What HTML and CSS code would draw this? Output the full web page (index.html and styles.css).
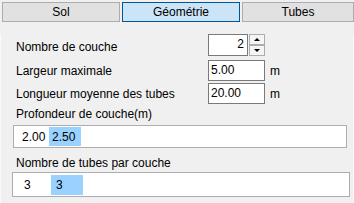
FILE: index.html
```html
<!DOCTYPE html>
<html lang="fr">
<head>
    <meta charset="UTF-8">
    <title>Géométrie</title>
    <link rel="stylesheet" href="styles.css">
</head>
<body>
    <div class="tabs">
        <div class="tab">Sol</div>
        <div class="tab active">Géométrie</div>
        <div class="tab">Tubes</div>
    </div>
    <div class="panel">
        <div class="row first">
            <span class="label">Nombre de couche</span>
            <div class="spin">
                <div class="spin-value">2</div>
                <div class="spin-btns">
                    <div class="spin-btn"><span class="arrow up"></span></div>
                    <div class="spin-btn"><span class="arrow down"></span></div>
                </div>
            </div>
        </div>
        <div class="row">
            <span class="label">Largeur maximale</span>
            <div class="field">5.00</div>
            <span class="unit">m</span>
        </div>
        <div class="row">
            <span class="label">Longueur moyenne des tubes</span>
            <div class="field">20.00</div>
            <span class="unit">m</span>
        </div>
        <div class="section-label">Profondeur de couche(m)</div>
        <div class="list depth">
            <span class="cell">2.00</span>
            <span class="cell selected">2.50</span>
        </div>
        <div class="section-label second">Nombre de tubes par couche</div>
        <div class="list tubes">
            <span class="cell">3</span>
            <span class="cell selected">3</span>
        </div>
    </div>
</body>
</html>
```

FILE: styles.css
```css
body {
    margin: 0;
    background-color: #f0f0f0;
    font-family: "Liberation Sans", Arial, sans-serif;
    font-size: 12px;
    color: #000;
    width: 354px;
    height: 203px;
    overflow: hidden;
}
.tabs {
    display: flex;
    gap: 2px;
    padding: 2px 0 0 2px;
    height: 20px;
}
.tab {
    box-sizing: border-box;
    width: 118px;
    height: 20px;
    border: 1px solid #adadad;
    background-color: #e1e1e1;
    display: flex;
    align-items: center;
    justify-content: center;
}
.tab.active {
    background-color: #cce4f7;
    border-color: #005499;
}
.tab:last-child {
    width: 112px;
}
.panel {
    margin-top: 1px;
    height: 178px;
    border-left: 1px solid #fafafa;
    border-right: 1px solid #fafafa;
    padding-left: 15px;
}
.row {
    display: flex;
    align-items: center;
    height: 21px;
    margin-top: 2px;
}
.row.first {
    margin-top: 12px;
    height: 22px;
    margin-bottom: 4px;
}
.label {
    width: 192px;
    padding-top: 1px;
}
.row.first .label {
    padding-top: 4px;
}
.spin {
    display: flex;
    gap: 1px;
    height: 22px;
}
.spin-value {
    box-sizing: border-box;
    width: 40px;
    height: 22px;
    background: #fff;
    border: 1px solid #7a7a7a;
    text-align: right;
    padding-right: 3px;
    line-height: 19px;
}
.spin-btns {
    display: flex;
    flex-direction: column;
    width: 16px;
}
.spin-btn {
    box-sizing: border-box;
    height: 11px;
    border: 1px solid #adadad;
    background: #f5f5f5;
    display: flex;
    align-items: center;
    justify-content: center;
}
.arrow {
    width: 0;
    height: 0;
    border-left: 3px solid transparent;
    border-right: 3px solid transparent;
}
.arrow.up {
    border-bottom: 3px solid #000;
}
.arrow.down {
    border-top: 3px solid #000;
}
.field {
    box-sizing: border-box;
    width: 57px;
    height: 21px;
    background: #fff;
    border: 1px solid #7a7a7a;
    padding-left: 2px;
    line-height: 19px;
}
.unit {
    margin-left: 5px;
}
.section-label {
    margin-top: 2px;
    height: 16px;
    line-height: 16px;
}
.section-label.second {
    margin-top: 7px;
}
.list {
    box-sizing: border-box;
    background: #fff;
    border: 1px solid #adadad;
    display: flex;
    align-items: stretch;
}
.list.depth {
    margin: 3px 0 0 -3px;
    width: 334px;
    height: 23px;
    padding: 1px 0 1px 5px;
}
.list.tubes {
    margin: 1px 0 0 -4px;
    width: 338px;
    height: 25px;
    padding: 2px 0 1px 0;
}
.cell {
    display: flex;
    align-items: center;
    box-sizing: border-box;
}
.list.depth .cell {
    width: 30px;
    padding-left: 3px;
}
.list.depth .cell.selected {
    width: 32px;
    padding-left: 3px;
}
.list.tubes .cell {
    width: 38px;
    padding-left: 11px;
}
.cell.selected,
.list.tubes .cell.selected {
    background-color: #99d1ff;
}
.list.tubes .cell.selected {
    width: 32px;
    padding-left: 5px;
}
```
